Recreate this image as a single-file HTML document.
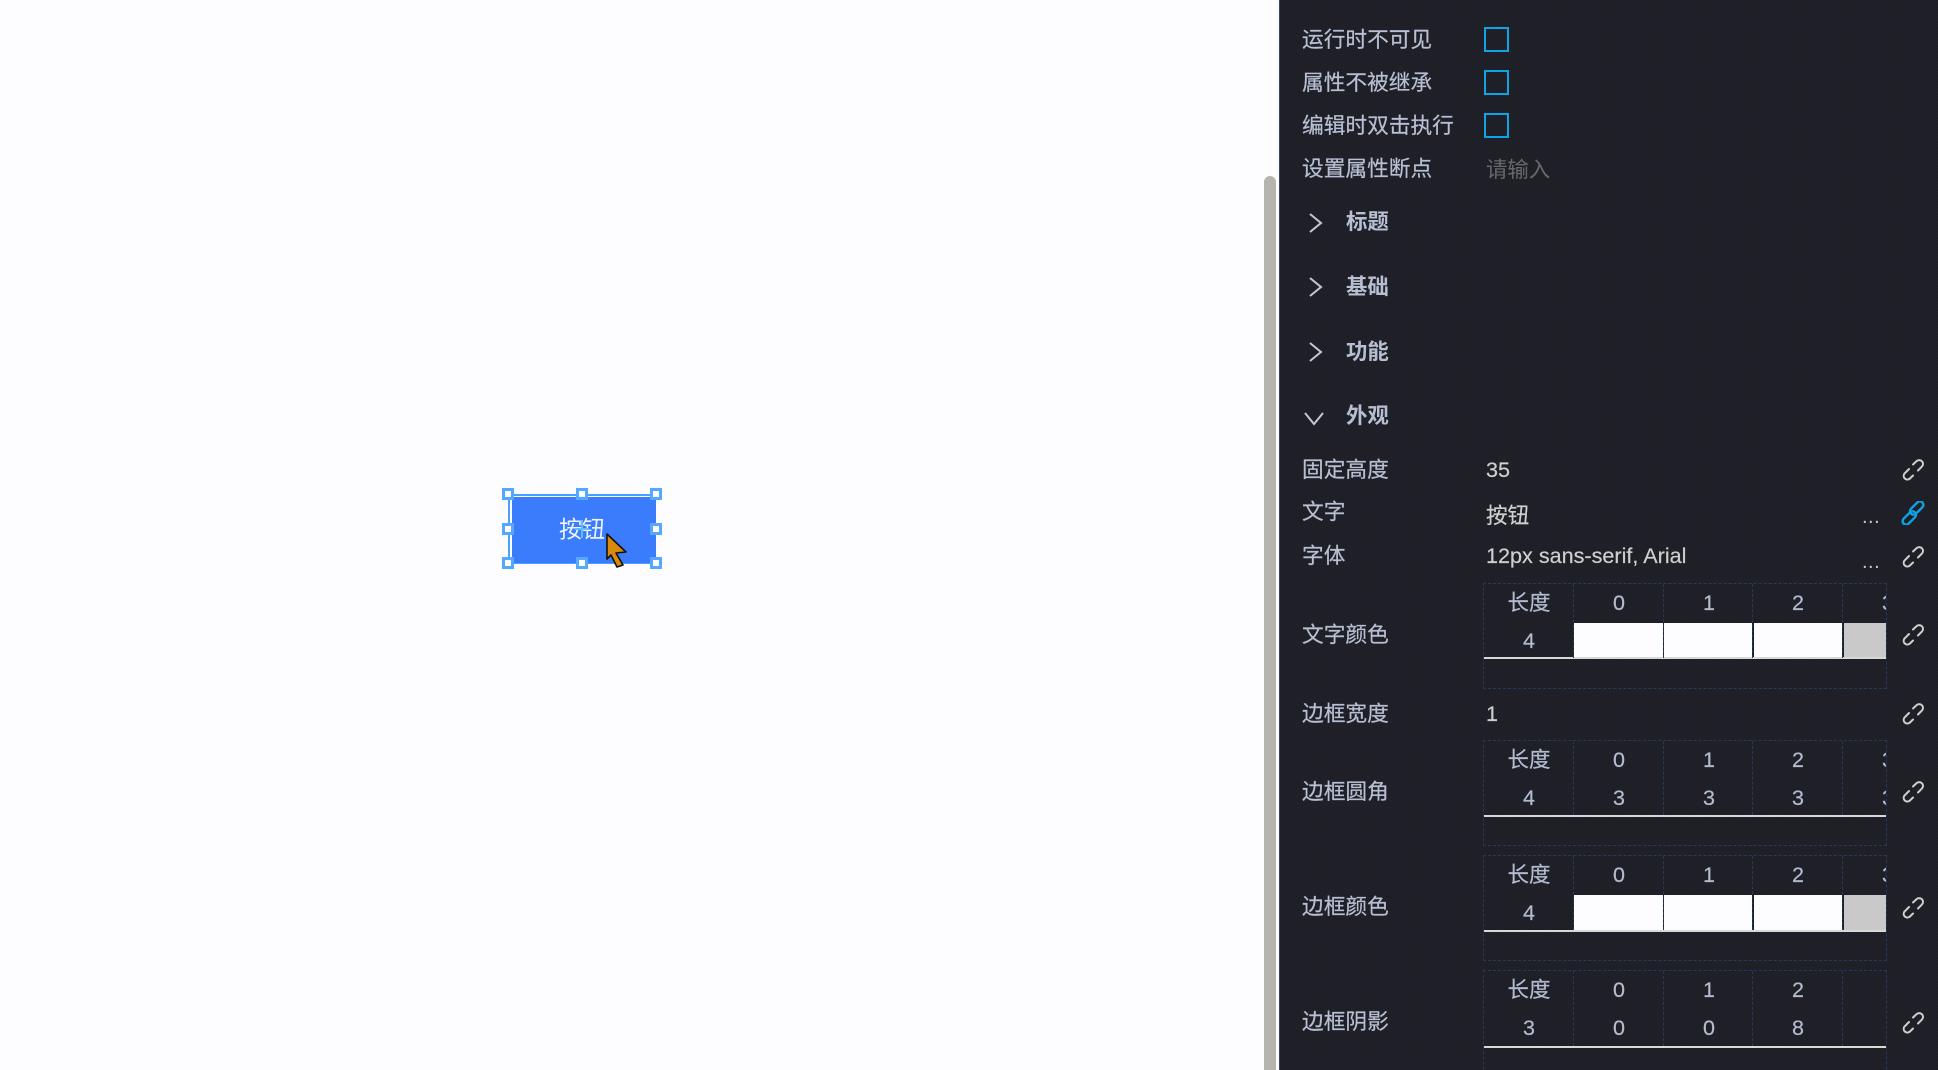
<!DOCTYPE html>
<html><head><meta charset="utf-8">
<style>
html,body{margin:0;padding:0;width:1938px;height:1070px;overflow:hidden;background:#fdfdff}
body{position:relative;font-family:"Liberation Sans","Noto Sans CJK SC",sans-serif}
.a{position:absolute}
#panel{left:1279px;top:0;width:659px;height:1070px;background-color:#1f2026;background-image:conic-gradient(#222329 25%,#1c1e25 0 50%,#222329 0 75%,#1c1e25 0);background-size:3px 3px;border-left:1px solid #30456a;box-sizing:border-box}
.l{position:absolute;left:1302px;color:#b8bfd3;font-size:21.7px;line-height:30px;height:30px;white-space:nowrap;-webkit-text-stroke:.2px #b8bfd3}
.s{position:absolute;left:1346px;color:#b8bfd3;font-size:21.4px;font-weight:bold;line-height:30px;height:30px;white-space:nowrap}
.v{position:absolute;left:1486px;color:#cfcfcf;font-size:21.6px;line-height:30px;height:30px;white-space:nowrap;-webkit-text-stroke:.2px #cfcfcf}
.cb{position:absolute;left:1484px;width:25px;height:25px;border:2.5px solid #0ea5e6;box-sizing:border-box}
.t{position:absolute;left:1483px;width:404px;overflow:hidden;border:1px dashed #263a58;box-sizing:border-box;height:106px}
.t i{position:absolute;top:0;height:74px;width:0;border-left:1px dashed #263a58}
.t b{position:absolute;font-weight:normal;color:#b3bbd0;font-size:21.5px;line-height:30px;height:30px;width:90px;text-align:center;-webkit-text-stroke:.2px #b3bbd0}
.t u{position:absolute;top:39px;height:35px;background:#fdfdff}
.t em{position:absolute;left:0;right:0;top:73px;height:2px;background:#d8d8d4}
.r1{top:4px}.r2{top:42px}
.c0{left:0}.c1{left:90px}.c2{left:180px}.c3{left:269px}.c4{left:359px}
.k{position:absolute;left:1901px;width:24px;height:24px;fill:none;stroke:#cfd0cc;stroke-width:2;stroke-linecap:round}
.dots{position:absolute;left:1862px;color:#c8c8c8;font-size:20px;line-height:20px;letter-spacing:.5px}
.h{position:absolute;width:12px;height:12px;background:#fff;border:3px solid #55a8ff;box-sizing:border-box}
</style></head>
<body>
<div class="a" style="left:1264px;top:176px;width:12px;height:900px;background:#b5b5ad;border-radius:6px 6px 0 0"></div>
<div class="a" id="panel"></div>

<div class="l" style="top:25px">运行时不可见</div>
<div class="cb" style="top:27px"></div>
<div class="l" style="top:68px">属性不被继承</div>
<div class="cb" style="top:70px"></div>
<div class="l" style="top:111px">编辑时双击执行</div>
<div class="cb" style="top:113px"></div>
<div class="l" style="top:154px">设置属性断点</div>
<div class="a" style="left:1486px;top:155px;color:#68686c;font-size:21.4px;line-height:30px">请输入</div>

<svg class="a" style="left:1300px;top:205px" width="30" height="230" fill="none" stroke="#c4c8d4" stroke-width="2">
<path d="M10 9L21 18L10 27"/><path d="M10 73L21 82L10 91"/><path d="M10 138L21 147L10 156"/><path d="M5 208L14 219L23 208"/>
</svg>
<div class="s" style="top:207px">标题</div>
<div class="s" style="top:272px">基础</div>
<div class="s" style="top:337px">功能</div>
<div class="s" style="top:401px">外观</div>

<div class="l" style="top:455px">固定高度</div>
<div class="v" style="top:455px">35</div>
<div class="l" style="top:497px">文字</div>
<div class="v" style="top:501px">按钮</div>
<div class="dots" style="top:507px">...</div>
<div class="l" style="top:541px">字体</div>
<div class="v" style="top:541px">12px sans-serif, Arial</div>
<div class="dots" style="top:552px">...</div>
<div class="l" style="top:620px">文字颜色</div>
<div class="l" style="top:699px">边框宽度</div>
<div class="v" style="top:699px">1</div>
<div class="l" style="top:777px">边框圆角</div>
<div class="l" style="top:892px">边框颜色</div>
<div class="l" style="top:1007px">边框阴影</div>

<div class="t" style="top:583px">
<u style="left:90px;width:89px"></u><u style="left:180px;width:88px"></u><u style="left:270px;width:88px"></u><u style="left:360px;width:44px;background:#c9c9c9"></u>
<em></em>
<i style="left:89px"></i><i style="left:179px"></i><i style="left:268px"></i><i style="left:358px"></i>
<b class="r1 c0">长度</b><b class="r1 c1">0</b><b class="r1 c2">1</b><b class="r1 c3">2</b><b class="r1 c4">3</b>
<b class="r2 c0">4</b>
</div>

<div class="t" style="top:740px">
<em style="top:74px"></em>
<i style="left:89px"></i><i style="left:179px"></i><i style="left:268px"></i><i style="left:358px"></i>
<b class="r1 c0">长度</b><b class="r1 c1">0</b><b class="r1 c2">1</b><b class="r1 c3">2</b><b class="r1 c4">3</b>
<b class="r2 c0">4</b><b class="r2 c1">3</b><b class="r2 c2">3</b><b class="r2 c3">3</b><b class="r2 c4">3</b>
</div>

<div class="t" style="top:855px">
<u style="left:90px;width:89px"></u><u style="left:180px;width:88px"></u><u style="left:270px;width:88px"></u><u style="left:360px;width:44px;background:#c9c9c9"></u>
<em style="top:74px"></em>
<i style="left:89px"></i><i style="left:179px"></i><i style="left:268px"></i><i style="left:358px"></i>
<b class="r1 c0">长度</b><b class="r1 c1">0</b><b class="r1 c2">1</b><b class="r1 c3">2</b><b class="r1 c4">3</b>
<b class="r2 c0">4</b>
</div>

<div class="t" style="top:970px;height:130px">
<em style="top:75px"></em>
<i style="left:89px;height:75px"></i><i style="left:179px;height:75px"></i><i style="left:268px;height:75px"></i><i style="left:358px;height:75px"></i>
<b class="r1 c0">长度</b><b class="r1 c1">0</b><b class="r1 c2">1</b><b class="r1 c3">2</b>
<b class="r2 c0">3</b><b class="r2 c1">0</b><b class="r2 c2">0</b><b class="r2 c3">8</b>
</div>

<svg width="0" height="0" style="position:absolute"><defs>
<symbol id="lk" viewBox="0 0 24 24"><path d="M12 6.5L15.5 3.2a3.8 3.8 0 0 1 5.4 5.4L17 12.5"/><path d="M8 11L3.5 15.5a3.7 3.7 0 0 0 5.2 5.2L12 17.5"/></symbol>
</defs></svg>
<svg class="k" style="top:458px"><use href="#lk"/></svg>
<svg class="k" style="top:501px;stroke:#0ea0e6;stroke-width:2.4" viewBox="0 0 24 24"><rect x="12.2" y="-1" width="7" height="16" rx="3.5" transform="rotate(45 15.7 7)"/><rect x="4.8" y="9" width="7" height="16" rx="3.5" transform="rotate(45 8.3 17)"/></svg>
<svg class="k" style="top:545px"><use href="#lk"/></svg>
<svg class="k" style="top:623px"><use href="#lk"/></svg>
<svg class="k" style="top:702px"><use href="#lk"/></svg>
<svg class="k" style="top:780px"><use href="#lk"/></svg>
<svg class="k" style="top:896px"><use href="#lk"/></svg>
<svg class="k" style="top:1011px"><use href="#lk"/></svg>

<!-- canvas button -->
<div class="a" style="left:508px;top:494px;width:148px;height:70px;border:2px solid #4aa0ff;box-sizing:border-box;background:#fff"></div>
<div class="a" style="left:512px;top:497px;width:144px;height:66px;background:#3a7cfb"></div>
<div class="a" style="left:512px;top:514px;width:140px;height:30px;line-height:30px;text-align:center;color:#eef3ff;font-size:23px">按钮</div>
<svg class="a" style="left:572px;top:519px" width="20" height="20" fill="none" stroke="#66bcf8" stroke-width="2"><path d="M10 1V19M3 10H17"/></svg>
<div class="h" style="left:502px;top:488px"></div>
<div class="h" style="left:576px;top:488px"></div>
<div class="h" style="left:650px;top:488px"></div>
<div class="h" style="left:502px;top:523px"></div>
<div class="h" style="left:650px;top:523px"></div>
<div class="h" style="left:502px;top:557px"></div>
<div class="h" style="left:576px;top:557px"></div>
<div class="h" style="left:650px;top:557px"></div>
<svg class="a" style="left:600px;top:528px" width="34" height="42"><path d="M7 6L26 24L16 25L23 37L17 39L11 27L7 31Z" fill="#d98a0c" stroke="#111" stroke-width="1.6" stroke-linejoin="round"/></svg>
</body></html>
